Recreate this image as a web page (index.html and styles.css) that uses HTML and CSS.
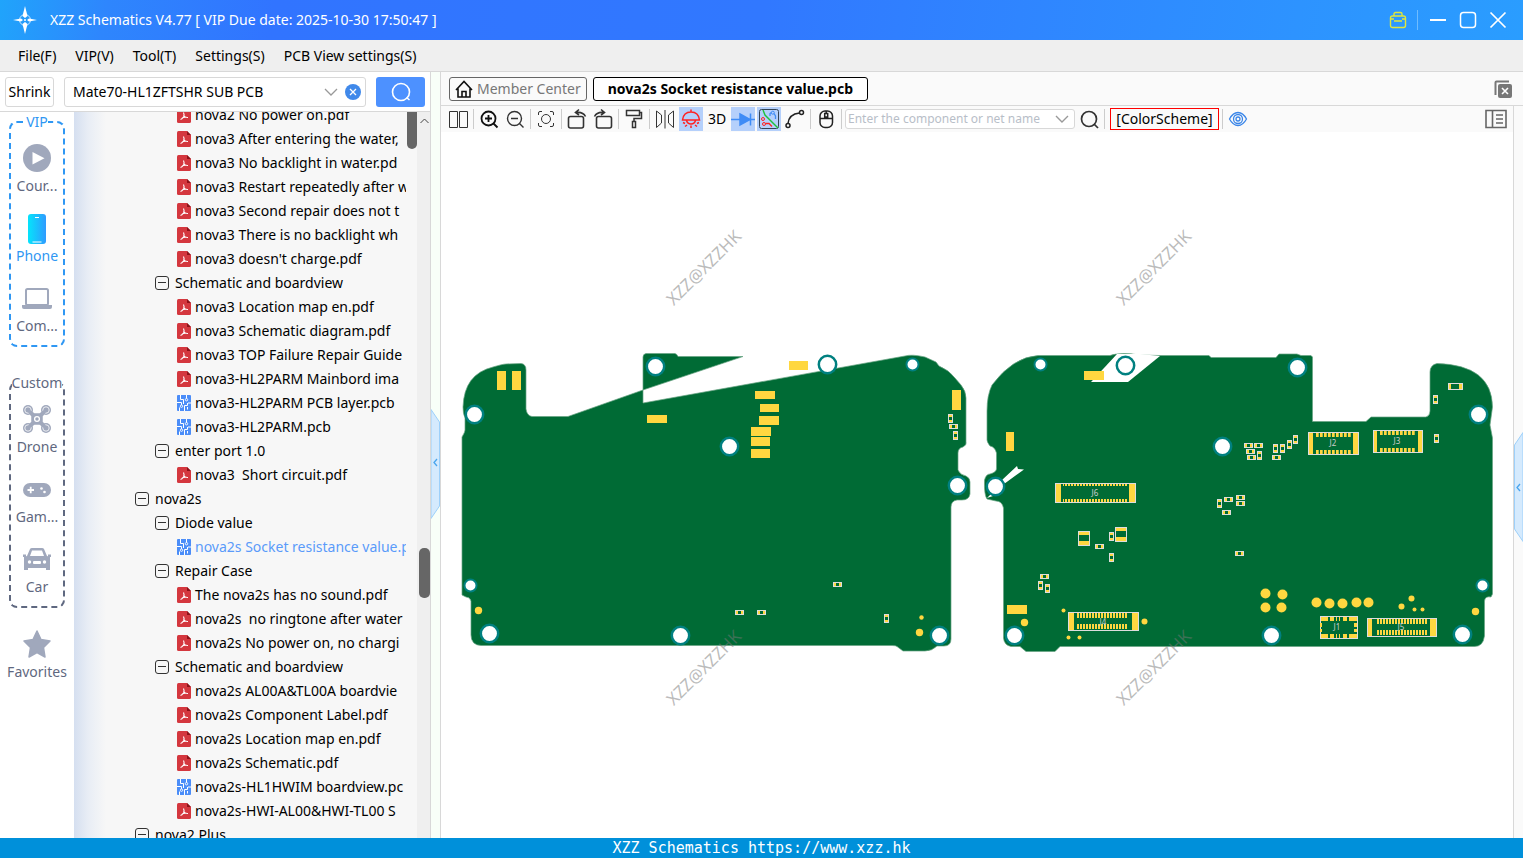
FILE: index.html
```
<!DOCTYPE html>
<html lang="en">
<head>
    <meta charset="utf-8">
    <title>XZZ Schematics</title>
    <link rel="stylesheet" href="styles.css">
</head>
<body>
    <!-- shared icons -->
    <svg class="defs" width="0" height="0">
        <symbol id="pdf" viewBox="0 0 14 16">
            <path d="M1.500 0H10L14 4V14.500Q14 16 12.500 16H1.500Q0 16 0 14.500V1.500Q0 0 1.500 0Z" fill="#d4373e"/>
            <path d="M10 0L14 4H10Z" fill="#8c1218"/>
            <path d="M6.500 5.500Q7.500 8 6.800 9.500Q5.500 12 3.500 12.500M6.500 8Q8 11 11 10.500M5 11Q7.500 9.800 9 10.300" fill="none" stroke="#fff" stroke-width="1.100"/>
        </symbol>
        <symbol id="pcb" viewBox="0 0 14 16">
            <rect width="14" height="16" rx="1" fill="#4b8df8"/>
            <path d="M3.500 0V4.500H6.500V9M0 7.500H4.500V10M9.500 3.500V0M7.500 16V10.500H10.500V8M11 8H14M2.500 16V12.500M10.500 12V14.500" fill="none" stroke="#fff"/>
            <circle cx="9.500" cy="4.700" r="1.200" fill="none" stroke="#fff" stroke-width=".9"/>
            <circle cx="4.500" cy="11.200" r="1.200" fill="none" stroke="#fff" stroke-width=".9"/>
        </symbol>
        <symbol id="minus" viewBox="0 0 14 14">
            <rect x=".5" y=".5" width="13" height="13" rx="2.500" fill="none" stroke="#333"/>
            <path d="M3 6.500H11" stroke="#333"/>
        </symbol>
    </svg>

    <header class="titlebar">
        <svg width="24" height="28" viewBox="0 0 24 28">
            <path d="M12 0L14.500 10L12 12L9.500 10ZM12 28L14.500 18L12 16L9.500 18ZM0 14L8 12.500L10 14L8 15.500ZM24 14L16 12.500L14 14L16 15.500Z" fill="#fff"/>
            <circle cx="12" cy="14" r="5.500" fill="none" stroke="#fff" stroke-width="1" opacity=".7"/>
            <circle cx="12" cy="14" r="1" fill="#fff"/>
        </svg>
        <h1>XZZ Schematics V4.77 [ VIP Due date: 2025-10-30 17:50:47 ]</h1>
        <div class="winbtns">
            <button aria-label="Toolbox"><svg width="18" height="18" viewBox="0 0 18 18" fill="none" stroke="#dfe63c" stroke-width="1.400"><rect x="1.500" y="5" width="15" height="11.500" rx="2"/><path d="M5 5V3Q5 1.500 6.500 1.500H11.500Q13 1.500 13 3V5M2 8H5M13 8H16M5 10H13"/></svg></button>
            <i></i>
            <button aria-label="Minimize"><svg width="18" height="18" viewBox="0 0 18 18" stroke="#fff" stroke-width="2"><path d="M1 9H17"/></svg></button>
            <button aria-label="Maximize"><svg width="18" height="18" viewBox="0 0 18 18" fill="none" stroke="#fff" stroke-width="1.500"><rect x="1.500" y="1.500" width="15" height="15" rx="3"/></svg></button>
            <button aria-label="Close"><svg width="18" height="18" viewBox="0 0 18 18" stroke="#fff" stroke-width="1.700"><path d="M1.500 1.500L16.500 16.500M16.500 1.500L1.500 16.500"/></svg></button>
        </div>
    </header>

    <nav class="menubar">
        <button>File(F)</button>
        <button>VIP(V)</button>
        <button>Tool(T)</button>
        <button>Settings(S)</button>
        <button>PCB View settings(S)</button>
    </nav>

    <main>
        <section class="left">
            <div class="search">
                <button class="shrink">Shrink</button>
                <div class="combo">
                    <input type="text" value="Mate70-HL1ZFTSHR SUB PCB" aria-label="Search files">
                    <button aria-label="History"><svg width="14" height="16" viewBox="0 0 14 16" fill="none" stroke="#999" stroke-width="1.300"><path d="M1 5L7 11L13 5"/></svg></button>
                    <button aria-label="Clear"><svg width="16" height="16" viewBox="0 0 16 16"><circle cx="8" cy="8" r="8" fill="#4089ea"/><path d="M5 5L11 11M11 5L5 11" stroke="#fff" stroke-width="1.300"/></svg></button>
                </div>
                <button class="go" aria-label="Search"><svg width="20" height="20" viewBox="0 0 20 20" fill="none" stroke="#fff" stroke-width="1.600"><circle cx="10" cy="10" r="8.500"/><path d="M15.500 15.500L18.500 18"/></svg></button>
            </div>
            <div class="browse">
                <nav class="side">
                    <fieldset class="vip">
                        <legend>VIP</legend>
                        <div class="group">
                            <button><svg width="28" height="28" viewBox="0 0 28 28"><circle cx="14" cy="14" r="14" fill="#a0a8bc"/><path d="M9.500 8V20.500L21.500 14.200Z" fill="#fff"/></svg>Cour...</button>
                            <button class="on"><svg width="28" height="30" viewBox="0 0 28 30"><defs><linearGradient id="ph"><stop offset="0" stop-color="#05e4fb"/><stop offset="1" stop-color="#2f9bff"/></linearGradient></defs><rect x="5" width="18" height="30" rx="3" fill="url(#ph)"/><path d="M12 3.500H16M9.500 28H18.500" stroke="#fff"/></svg>Phone</button>
                            <button><svg width="30" height="28" viewBox="0 0 30 28"><rect x="4" y="5" width="22" height="16" rx="1.500" fill="none" stroke="#a0a8bc" stroke-width="2"/><path d="M0 21H30V23Q30 25 28 25H2Q0 25 0 23Z" fill="#a0a8bc"/></svg>Com...</button>
                        </div>
                    </fieldset>
                    <fieldset class="custom">
                        <legend>Custom</legend>
                        <div class="group">
                            <button><svg width="28" height="28" viewBox="0 0 28 28"><g fill="#a0a8bc"><circle cx="5" cy="5" r="5"/><circle cx="23" cy="5" r="5"/><circle cx="5" cy="23" r="5"/><circle cx="23" cy="23" r="5"/></g><g fill="none" stroke="#fff" stroke-width=".8"><circle cx="5" cy="5" r="3.200"/><circle cx="23" cy="5" r="3.200"/><circle cx="5" cy="23" r="3.200"/><circle cx="23" cy="23" r="3.200"/></g><path d="M5 5L11 9.500H17L23 5L18.500 11V17L23 23L17 18.500H11L5 23L9.500 17V11Z" fill="#a0a8bc" stroke="#a0a8bc" stroke-width="2.500" stroke-linejoin="round"/><circle cx="14" cy="14" r="2.400" fill="none" stroke="#fff" stroke-width="1.300"/></svg>Drone</button>
                            <button><svg width="28" height="28" viewBox="0 0 28 28"><rect y="8" width="28" height="14" rx="7" fill="#a0a8bc"/><path d="M4.500 15H11M7.700 11.700V18.300" stroke="#fff" stroke-width="1.800"/><circle cx="18.500" cy="13.500" r="1.300" fill="#fff"/><circle cx="21.500" cy="17" r="1.300" fill="#fff"/></svg>Gam...</button>
                            <button><svg width="28" height="28" viewBox="0 0 28 28"><path d="M1 12L4 11L7 4Q7.500 3 9 3H19Q20.500 3 21 4L24 11L27 12V25H23V23H5V25H1ZM7 11H21L19 5.500H9Z" fill="#a0a8bc" fill-rule="evenodd"/><path d="M0 9.500H3V12H0ZM25 9.500H28V12H25Z" fill="#a0a8bc"/><circle cx="6.500" cy="17" r="1.700" fill="#fff"/><circle cx="21.500" cy="17" r="1.700" fill="#fff"/><rect x="10" y="16" width="8" height="3" rx="1" fill="#fff"/></svg>Car</button>
                        </div>
                    </fieldset>
                    <button class="fav"><svg width="28" height="28" viewBox="0 0 28 28"><path d="M14 1L18 9.500L27 11L20.500 17.500L22 27L14 22.500L6 27L7.500 17.500L1 11L10 9.500Z" fill="#a0a8bc" stroke="#a0a8bc" stroke-width="1.500" stroke-linejoin="round"/></svg>Favorites</button>
                </nav>

                <div class="treebox">
                    <ul class="tree">
                        <li class="l3"><svg><use href="#pdf"/></svg>nova2 No power on.pdf</li>
                        <li class="l3"><svg><use href="#pdf"/></svg>nova3 After entering the water,</li>
                        <li class="l3"><svg><use href="#pdf"/></svg>nova3 No backlight in water.pd</li>
                        <li class="l3"><svg><use href="#pdf"/></svg>nova3 Restart repeatedly after w</li>
                        <li class="l3"><svg><use href="#pdf"/></svg>nova3 Second repair does not t</li>
                        <li class="l3"><svg><use href="#pdf"/></svg>nova3 There is no backlight wh</li>
                        <li class="l3"><svg><use href="#pdf"/></svg>nova3 doesn't charge.pdf</li>
                        <li class="l2"><button aria-label="Collapse"><svg><use href="#minus"/></svg></button>Schematic and boardview</li>
                        <li class="l3"><svg><use href="#pdf"/></svg>nova3 Location map en.pdf</li>
                        <li class="l3"><svg><use href="#pdf"/></svg>nova3 Schematic diagram.pdf</li>
                        <li class="l3"><svg><use href="#pdf"/></svg>nova3 TOP Failure Repair Guide</li>
                        <li class="l3"><svg><use href="#pdf"/></svg>nova3-HL2PARM Mainbord ima</li>
                        <li class="l3"><svg><use href="#pcb"/></svg>nova3-HL2PARM PCB layer.pcb</li>
                        <li class="l3"><svg><use href="#pcb"/></svg>nova3-HL2PARM.pcb</li>
                        <li class="l2"><button aria-label="Collapse"><svg><use href="#minus"/></svg></button>enter port 1.0</li>
                        <li class="l3"><svg><use href="#pdf"/></svg>nova3&nbsp; Short circuit.pdf</li>
                        <li class="l1"><button aria-label="Collapse"><svg><use href="#minus"/></svg></button>nova2s</li>
                        <li class="l2"><button aria-label="Collapse"><svg><use href="#minus"/></svg></button>Diode value</li>
                        <li class="l3 sel"><svg><use href="#pcb"/></svg>nova2s Socket resistance value.p</li>
                        <li class="l2"><button aria-label="Collapse"><svg><use href="#minus"/></svg></button>Repair Case</li>
                        <li class="l3"><svg><use href="#pdf"/></svg>The nova2s has no sound.pdf</li>
                        <li class="l3"><svg><use href="#pdf"/></svg>nova2s&nbsp; no ringtone after water</li>
                        <li class="l3"><svg><use href="#pdf"/></svg>nova2s No power on, no chargi</li>
                        <li class="l2"><button aria-label="Collapse"><svg><use href="#minus"/></svg></button>Schematic and boardview</li>
                        <li class="l3"><svg><use href="#pdf"/></svg>nova2s AL00A&amp;TL00A boardvie</li>
                        <li class="l3"><svg><use href="#pdf"/></svg>nova2s Component Label.pdf</li>
                        <li class="l3"><svg><use href="#pdf"/></svg>nova2s Location map en.pdf</li>
                        <li class="l3"><svg><use href="#pdf"/></svg>nova2s Schematic.pdf</li>
                        <li class="l3"><svg><use href="#pcb"/></svg>nova2s-HL1HWIM boardview.pc</li>
                        <li class="l3"><svg><use href="#pdf"/></svg>nova2s-HWI-AL00&amp;HWI-TL00 S</li>
                        <li class="l1"><button aria-label="Collapse"><svg><use href="#minus"/></svg></button>nova2 Plus</li>
                    </ul>
                    <div class="innerbar"><i></i></div>
                    <div class="outerbar">
                        <svg width="12" height="16" viewBox="0 0 12 16" fill="none" stroke="#444"><path d="M1.500 11L5.500 7L9.500 11"/></svg>
                        <i></i>
                    </div>
                </div>
            </div>
        </section>

        <div class="strip">
            <button aria-label="Hide file list"><svg width="9" height="110" viewBox="0 0 9 110"><path d="M0 .5L8.500 13V97L0 109.500Z" fill="#d5eafd" stroke="#9dd0fa"/><path d="M6 50L3 53.500L6 57" fill="none" stroke="#4aa5ee" stroke-width="1.300"/></svg></button>
        </div>

        <section class="right">
            <div class="tabs">
                <button class="tab"><svg width="18" height="20" viewBox="0 0 18 20" fill="none" stroke="#111" stroke-width="1.600"><path d="M1 11L9 2.500L17 11M3 9.500V18H15V9.500M7 18V12.500H11V18"/></svg>Member Center</button>
                <button class="tab cur">nova2s Socket resistance value.pcb</button>
                <button class="closeall" aria-label="Close all tabs"><svg width="18" height="18" viewBox="0 0 18 18"><path d="M1.500 15V2.500Q1.500 1.500 2.500 1.500H15" fill="none" stroke="#777" stroke-width="2"/><rect x="4" y="4" width="14" height="14" rx="2" fill="#777"/><path d="M8 8L14 14M14 8L8 14" stroke="#fff" stroke-width="1.600"/></svg></button>
            </div>
            <div class="work">
                <div class="view">
                    <div class="tools">
                        <button aria-label="Split view"><svg viewBox="0 0 24 24"><path d="M3.500 4.500H11.500V20.500H3.500ZM13.500 4.500H21.500V20.500H13.500Z"/></svg></button>
                        <i></i>
                        <button aria-label="Zoom in"><svg viewBox="0 0 24 24" stroke="#111" stroke-width="1.800"><circle cx="11.500" cy="11.500" r="7"/><path d="M16.500 16.500L20.500 20.500M8 11.500H15M11.500 8V15"/></svg></button>
                        <button aria-label="Zoom out"><svg viewBox="0 0 24 24" stroke="#333" stroke-width="1.400"><circle cx="11.500" cy="11.500" r="7"/><path d="M16.500 16.500L20.500 20.500M8 11.500H15"/></svg></button>
                        <i></i>
                        <button aria-label="Fit"><svg viewBox="0 0 24 24"><circle cx="12" cy="12" r="4.500"/><path d="M4.500 8V6Q4.500 4.500 6 4.500H8M16 4.500H18Q19.500 4.500 19.500 6V8M19.500 16V18Q19.500 19.500 18 19.500H16M8 19.500H6Q4.500 19.500 4.500 18V16"/></svg></button>
                        <i></i>
                        <button aria-label="Rotate left"><svg viewBox="0 0 24 24" stroke="#333" stroke-width="1.600"><rect x="3.500" y="9.500" width="15" height="11.500" rx="2"/><path d="M11 5.500Q18 4.500 20.500 9.500M14 2.500L10.500 5.500L14 8"/></svg></button>
                        <button aria-label="Rotate right"><svg viewBox="0 0 24 24" stroke="#333" stroke-width="1.600"><rect x="5.500" y="9.500" width="15" height="11.500" rx="2"/><path d="M13 5.500Q6 4.500 3.500 9.500M10 2.500L13.500 5.500L10 8"/></svg></button>
                        <i></i>
                        <button aria-label="Brush"><svg viewBox="0 0 24 24" stroke="#333" stroke-width="1.500"><path d="M4.500 3.500H17.500V8.500H4.500ZM17.500 5.500H19.500V11.500H12V14.500"/><path d="M10.500 14.500H13.500V20.500H10.500Z"/></svg></button>
                        <i></i>
                        <button aria-label="Mirror"><svg viewBox="0 0 24 24"><path d="M3.500 4L8.500 8V16L3.500 20.500ZM12 3V21.500M20.500 4L15.500 8V16L20.500 20.500Z"/></svg></button>
                        <button class="on" aria-label="Lamp"><svg viewBox="0 0 24 24" stroke="#f22" stroke-width="1.500"><path d="M3.500 13Q4.500 5 12 5Q19.500 5 20.500 13ZM12 2.500V5M7.500 13.500Q8.500 17 12 17Q15.500 17 16.500 13.500M12 18.500V21M4 15.500L6 16.500M20 15.500L18 16.500M6 19.500L8 18M18 19.500L16 18"/></svg></button>
                        <button>3D</button>
                        <button class="on" aria-label="Diode"><svg viewBox="0 0 24 24" stroke="#3f8cf6" stroke-width="1.500"><path d="M0 12.500H24M19.500 6.500V18.500"/><path d="M9 7L19 12.500L9 18Z" fill="#3f8cf6"/></svg></button>
                        <button class="on" aria-label="Nets"><svg viewBox="0 0 24 24"><rect x="2.500" y="2.500" width="19" height="19" rx="2" stroke="#345"/><path d="M6 3L8 8L21 21" stroke="#1fc13c" stroke-width="1.400"/><path d="M13 9V6.500L14.500 5.500M17 6.500L18.500 9V12" stroke="#3f8cf6" stroke-width="1.300"/><circle cx="15.800" cy="5.700" r="1.500" stroke="#3f8cf6"/><path d="M8.500 16.500H12L15 19.500" stroke="#f22" stroke-width="1.300"/><circle cx="6" cy="12" r="1.500" stroke="#f22"/><circle cx="7" cy="17" r="1.500" stroke="#f22"/></svg></button>
                        <button aria-label="Curve"><svg viewBox="0 0 24 24" stroke="#222" stroke-width="1.500"><circle cx="5" cy="18.500" r="2"/><circle cx="18.500" cy="5.500" r="2"/><path d="M5 16.500Q6 7 16.500 6"/></svg></button>
                        <i></i>
                        <button aria-label="Mouse"><svg viewBox="0 0 24 24" stroke="#222" stroke-width="1.500"><rect x="6" y="4" width="12.500" height="16.500" rx="5"/><path d="M6 11.500H18.500M12.200 4V6M10.700 6.500H13.700V10H10.700Z"/></svg></button>
                        <i></i>
                        <div class="combo small">
                            <input type="text" placeholder="Enter the component or net name" aria-label="Component or net name">
                            <button aria-label="Recent"><svg viewBox="0 0 14 16" stroke="#999" stroke-width="1.400"><path d="M1 5L7 11L13 5"/></svg></button>
                        </div>
                        <button aria-label="Find"><svg viewBox="0 0 24 24" stroke="#333" stroke-width="1.700"><circle cx="12" cy="12" r="7.500"/><path d="M17 17L21 21"/></svg></button>
                        <i></i>
                        <button class="scheme">[ColorScheme]</button>
                        <i></i>
                        <button aria-label="Show"><svg viewBox="0 0 24 24" stroke="#3b86e8" stroke-width="1.300"><path d="M3.500 12Q7 5.500 12 5.500Q17 5.500 20.500 12Q17 18.500 12 18.500Q7 18.500 3.500 12Z"/><circle cx="12" cy="12" r="4.500"/><circle cx="12" cy="12" r="2"/></svg></button>
                        <button class="panelbtn" aria-label="Side panel"><svg width="22" height="20" viewBox="0 0 22 20" stroke="#666" stroke-width="1.600"><path d="M1 1.500H21V18.500H1ZM7.500 1.500V18.500M11 6H18M11 10H18M11 14H18"/></svg></button>
                    </div>
                    <svg class="board" viewBox="441 132 1072 706">
                        <defs>
                            <g id="rh"><rect x=".5" y=".5" width="8" height="4" fill="#ffd740" stroke="#ddd"/><rect x="3" y="1" width="3" height="3" fill="#006b35"/></g>
                            <g id="rv"><rect x=".5" y=".5" width="4" height="8" fill="#ffd740" stroke="#ddd"/><rect x="1" y="3" width="3" height="3" fill="#006b35"/></g>
                            <g id="cap"><rect x=".5" y=".5" width="11" height="14" fill="#ffd740" stroke="#ddd"/><rect x="1" y="4" width="10" height="6" fill="#006b35"/></g>
                            <circle id="hole" r="8.700" fill="#fff" stroke="#008080" stroke-width="2.500"/>
                            <circle id="hole2" r="6" fill="#fff" stroke="#008080" stroke-width="2"/>
                            <pattern id="pins" width="4" height="10" patternUnits="userSpaceOnUse"><rect width="2.700" height="10" fill="#ffd740"/></pattern>
                            <pattern id="fine" width="3" height="10" patternUnits="userSpaceOnUse"><rect width="2" height="10" fill="#ffd740"/></pattern>
                        </defs>
                        <!-- board outlines -->
                        <g fill="#006b35" stroke="#69a584" stroke-width=".7">
                            <path d="M463 407Q464 374 493 367Q503 364 506 364L521 363.500Q526 364 526 370V409Q527 416 532 416.500H568L643 390V357Q643 354 646 353.500H675Q677 354 678 356.500H743L643 390V403L905 356Q912 354 925 357L936 362L939 366Q949 370 955 378L961 385Q966 391 966 398V442Q967 445 963 447Q958 448 958 453V470Q960 475 966 476Q970 478 970 482V494Q969 500 962 500H957Q951 501 951 507V639Q951 646 944 646H937Q932 651 925 651H903L897 646.500Q896 645.500 892 645.500H481Q471 645 471 635V601Q470 597 466 597L462 595V437Q465 432 465 430V418Q463 414 463 407Z"/>
                            <path d="M987 411Q987 395 992 385Q1013 357 1038 355.500H1110Q1120 352 1140 355L1160 355.500H1209L1211 357.500H1276L1279 354H1297L1301 355.500H1311L1312.500 357V421.500H1366L1371 417H1426Q1430 416 1430 411V372Q1430 365 1437 363.500Q1492 365 1492.500 407L1490 425L1492.500 438V594L1491 597Q1485 596 1484.500 601V636Q1483 647 1474 646.500H1060L1055 651.500H1026L1020 646.500H1011Q1004 645 1003.500 638V508Q1002 501 996 501L987 499Q984 495 984.500 480Q986 474 990 474Q997 472 996.500 468V453Q995 447 990 446Q987 442 987 440Z"/>
                        </g>
                        <path d="M1117 354H1140L1160 356L1128 382H1091Z" fill="#fff"/>
                        <path d="M1002 480L1017 466L1018 469L1024 469.500L1004 484ZM987 498L991 494L993 496Z" fill="#fff"/>

                        <!-- bare pads -->
                        <g fill="#ffd740">
                            <rect x="497" y="371" width="9" height="19"/><rect x="512" y="371" width="9" height="19"/>
                            <rect x="647" y="415" width="20" height="8"/><rect x="789" y="361" width="19" height="9"/>
                            <rect x="755" y="391" width="20" height="8"/><rect x="760" y="404" width="19" height="8"/>
                            <rect x="759" y="416" width="20" height="9"/><rect x="751" y="427" width="20" height="9"/>
                            <rect x="751" y="437" width="19" height="9"/><rect x="751" y="449" width="19" height="9"/>
                            <rect x="952" y="390" width="9" height="20"/><rect x="1084" y="371" width="20" height="9"/>
                            <rect x="1006" y="432" width="8" height="19"/><rect x="1007" y="605" width="20" height="9"/>
                            <circle cx="478.500" cy="610.500" r="3.700"/><circle cx="921.500" cy="617.500" r="2.200"/><circle cx="919.500" cy="632.500" r="3.700"/>
                            <circle cx="1024.500" cy="622.500" r="3.700"/><circle cx="1063.500" cy="610.500" r="2"/><circle cx="1068.500" cy="637.500" r="2"/><circle cx="1079.500" cy="637.500" r="2"/><circle cx="1144.500" cy="621.500" r="3"/>
                            <circle cx="1265.500" cy="593.500" r="5"/><circle cx="1282.500" cy="594.500" r="5"/><circle cx="1265.500" cy="607.500" r="5"/><circle cx="1281.500" cy="607.500" r="5"/>
                            <circle cx="1316.500" cy="602.500" r="5"/><circle cx="1329.500" cy="603.500" r="5"/><circle cx="1342.500" cy="603.500" r="5"/><circle cx="1356.500" cy="602.500" r="5"/><circle cx="1368.500" cy="602.500" r="5"/>
                            <circle cx="1411.500" cy="598.500" r="3"/><circle cx="1401.500" cy="606.500" r="3"/><circle cx="1414.500" cy="609.500" r="2"/><circle cx="1422.500" cy="609.500" r="2"/><circle cx="1475.500" cy="611.500" r="3.700"/>
                        </g>

                        <!-- screw holes -->
                        <use href="#hole" x="474.500" y="414.500"/><use href="#hole" x="655.500" y="366.500"/><use href="#hole" x="729.500" y="446.500"/><use href="#hole" x="827.500" y="364.500"/>
                        <use href="#hole" x="957.500" y="485.500"/><use href="#hole" x="489.500" y="633.500"/><use href="#hole" x="680.500" y="635.500"/><use href="#hole" x="939.500" y="635.500"/>
                        <use href="#hole" x="1125.500" y="365.500"/><use href="#hole" x="1297.500" y="367.500"/><use href="#hole" x="1222.500" y="446.500"/><use href="#hole" x="995.500" y="486.500"/>
                        <use href="#hole" x="1014.500" y="635.500"/><use href="#hole" x="1271.500" y="635.500"/><use href="#hole" x="1462.500" y="634.500"/><use href="#hole" x="1478.500" y="414.500"/>
                        <use href="#hole2" x="470.500" y="585.500"/><use href="#hole2" x="912.500" y="364.500"/><use href="#hole2" x="1040.500" y="364.500"/><use href="#hole2" x="1482.500" y="585.500"/>

                        <!-- resistors and capacitors -->
                        <use href="#rv" x="948" y="414"/><use href="#rh" x="949" y="424"/><use href="#rv" x="953" y="431"/><use href="#rh" x="833" y="582"/>
                        <use href="#rh" x="735" y="610"/><use href="#rh" x="757" y="610"/><use href="#rv" x="884" y="614"/>
                        <use href="#cap" x="1078" y="531"/><use href="#cap" x="1115" y="527"/><use href="#rv" x="1109" y="532"/><use href="#rv" x="1109" y="553"/><use href="#rh" x="1095" y="544"/>
                        <use href="#rh" x="1040" y="574"/><use href="#rv" x="1038" y="581"/><use href="#rv" x="1045" y="584"/>
                        <use href="#rh" x="1224" y="497"/><use href="#rh" x="1236" y="495"/><use href="#rh" x="1236" y="501"/><use href="#rv" x="1217" y="499"/><use href="#rh" x="1222" y="510"/><use href="#rh" x="1235" y="551"/>
                        <use href="#rh" x="1244" y="443"/><use href="#rh" x="1254" y="443"/><use href="#rh" x="1246" y="449"/><use href="#rh" x="1247" y="455"/><use href="#rv" x="1257" y="451"/>
                        <use href="#rv" x="1273" y="444"/><use href="#rv" x="1280" y="444"/><use href="#rv" x="1287" y="440"/><use href="#rv" x="1293" y="435"/><use href="#rh" x="1272" y="455"/>
                        <use href="#rv" x="1433" y="395"/><use href="#rv" x="1434" y="434"/>
                        <rect x="1448.500" y="383.500" width="14" height="6" fill="#ffd740" stroke="#ddd"/><rect x="1451" y="384" width="8" height="5" fill="#006b35"/>

                        <!-- connectors -->
                        <g fill="none" stroke="#ddd">
                            <rect x="1055.500" y="483.500" width="80" height="19"/><rect x="1068.500" y="612.500" width="70" height="18"/>
                            <rect x="1308.500" y="432.500" width="50" height="22"/><rect x="1373.500" y="430.500" width="49" height="22"/>
                            <rect x="1367.500" y="618.500" width="69" height="18"/><rect x="1320.500" y="616.500" width="37" height="22"/>
                        </g>
                        <g fill="#ffd740">
                            <path d="M1056 484H1061V502H1056ZM1129 484H1135V502H1129ZM1069 613H1074V630H1069ZM1132 613H1138V630H1132Z"/>
                            <path d="M1309 433H1313V454H1309ZM1353 433H1358V454H1353ZM1374 431H1377V452H1374ZM1418 431H1422V452H1418Z"/>
                            <path d="M1368 619H1372V636H1368ZM1430 619H1436V636H1430Z"/>
                            <path d="M1321 617H1328V621H1321ZM1330 617H1334V621H1330ZM1336 617H1337V621H1336ZM1339 617H1340V621H1339ZM1343 617H1347V621H1343ZM1349 617H1357V621H1349ZM1321 634H1328V638H1321ZM1330 634H1334V638H1330ZM1336 634H1337V638H1336ZM1339 634H1340V638H1339ZM1343 634H1347V638H1343ZM1349 634H1357V638H1349ZM1354 623H1357V627H1354ZM1354 629H1357V632H1354ZM1320 623H1322V627H1320ZM1320 629H1322V632H1320Z"/>
                        </g>
                        <g fill="url(#fine)">
                            <rect x="1063" y="484" width="64" height="2"/><rect x="1063" y="499" width="64" height="3"/>
                            <rect x="1077" y="613" width="51" height="5"/><rect x="1077" y="624" width="51" height="5"/>
                            <rect x="1376" y="619" width="51" height="5"/><rect x="1376" y="630" width="51" height="5"/>
                        </g>
                        <g fill="url(#pins)">
                            <rect x="1316" y="433" width="35" height="4"/><rect x="1316" y="450" width="35" height="4"/>
                            <rect x="1380" y="431" width="35" height="4"/><rect x="1380" y="448" width="35" height="4"/>
                        </g>
                        <g class="ref">
                            <text x="1095" y="496">J6</text><text x="1103" y="625">J4</text><text x="1333" y="446">J2</text>
                            <text x="1397" y="444">J3</text><text x="1401" y="630">J5</text><text x="1337" y="630">J1</text>
                        </g>
                        <g class="mark">
                            <text transform="translate(708 272) rotate(-45)">XZZ@XZZHK</text>
                            <text transform="translate(1158 272) rotate(-45)">XZZ@XZZHK</text>
                            <text transform="translate(708 672) rotate(-45)">XZZ@XZZHK</text>
                            <text transform="translate(1158 672) rotate(-45)">XZZ@XZZHK</text>
                        </g>
                    </svg>
                </div>
                <div class="strip end">
                    <button aria-label="Show side panel"><svg width="9" height="110" viewBox="0 0 9 110"><path d="M9 .5L.5 13V97L9 109.500Z" fill="#d5eafd" stroke="#9dd0fa"/><path d="M6 52L3 55.500L6 59" fill="none" stroke="#4aa5ee" stroke-width="1.300"/></svg></button>
                </div>
            </div>
        </section>
    </main>

    <footer>XZZ Schematics https://www.xzz.hk</footer>
</body>
</html>
```
FILE: styles.css
```
* {
    box-sizing: border-box;
}
body {
    margin: 0;
    height: 100vh;
    display: flex;
    flex-direction: column;
    overflow: hidden;
    font: 14px/20px "Noto Sans", "Open Sans", sans-serif;
    color: #000;
    background: #fff;
}
button, input {
    font: inherit;
    color: inherit;
    border: 0;
    padding: 0;
    margin: 0;
    background: none;
}
svg {
    display: block;
    flex: none;
}
.defs {
    position: absolute;
}

/* title bar */
.titlebar {
    height: 40px;
    flex: none;
    display: flex;
    align-items: center;
    gap: 13px;
    padding: 0 16px 0 13px;
    color: #fff;
    background: linear-gradient(100deg, #20a4fb 0, #2e86fd 7%, #3174ff 18%, #3178ff 50%, #2d93ff 85%, #2a9dff 100%);
}
.titlebar h1 {
    margin: 0;
    font-size: 14px;
    font-weight: normal;
}
.winbtns {
    margin-left: auto;
    display: flex;
    align-items: center;
    gap: 12px;
}
.winbtns i {
    width: 1px;
    height: 20px;
    margin: 0 -1px 0 -2px;
    background: #6fbcff;
}

/* menu */
.menubar {
    height: 32px;
    flex: none;
    display: flex;
    gap: 19px;
    padding: 0 18px;
    background: #efefef;
    border-bottom: 1px solid #d8d8d8;
}

main {
    flex: 1;
    min-height: 0;
    display: flex;
}
.left {
    width: 431px;
    flex: none;
    display: flex;
    flex-direction: column;
    border-right: 1px solid #d8d8d8;
}
.search {
    height: 40px;
    flex: none;
    display: flex;
    align-items: center;
    gap: 10px;
    padding: 0 5px;
    border-bottom: 1px solid #d8d8d8;
}
.shrink {
    width: 49px;
    height: 30px;
    border: 1px solid #d8d8d8;
    border-radius: 3px;
}
.combo {
    flex: 1;
    min-width: 0;
    height: 30px;
    display: flex;
    align-items: center;
    gap: 7px;
    padding: 0 4px 0 8px;
    border: 1px solid #d8d8d8;
    border-radius: 3px;
    background: #fff;
}
.combo input {
    flex: 1;
    min-width: 0;
    outline: none;
}
.go {
    width: 49px;
    height: 30px;
    display: grid;
    place-items: center;
    border-radius: 3px;
    background: #4d91ff;
}

/* category sidebar */
.browse {
    flex: 1;
    min-height: 0;
    display: flex;
}
.side {
    width: 74px;
    flex: none;
    color: #5f6880;
}
.side fieldset {
    margin: 0 9px 26px;
    padding: 12px 0 9px;
    min-width: 0;
    border: 2px dashed #5f6880;
    border-radius: 8px;
}
.side .vip {
    border-color: #2f97f3;
}
.side .custom {
    margin-bottom: 22px;
}
.side legend {
    margin: 0 auto;
    padding: 0;
}
.vip legend, .side .on {
    color: #2f97f3;
}
.group {
    display: flex;
    flex-direction: column;
    gap: 18px;
}
.side button {
    width: 100%;
    height: 52px;
    display: flex;
    flex-direction: column;
    align-items: center;
    justify-content: space-between;
}

/* file tree */
.treebox {
    flex: 1;
    min-width: 0;
    display: flex;
    overflow: hidden;
    background: linear-gradient(90deg, #d5dff0 0, #e8edf5 14px, #f7f7f7 32px);
}
.tree {
    flex: 1;
    min-width: 0;
    margin: -9px 0 0;
    padding: 0;
    list-style: none;
    overflow: hidden;
}
.tree li {
    height: 24px;
    display: flex;
    align-items: center;
    gap: 6px;
    white-space: pre;
}
.tree .l1 { padding-left: 61px; }
.tree .l2 { padding-left: 81px; }
.tree .l3 { padding-left: 103px; gap: 4px; }
.tree .sel { color: #5a9bfa; }
.tree svg {
    width: 14px;
    height: 16px;
}
.tree button svg {
    height: 14px;
}
.innerbar {
    width: 11px;
    padding-left: 1px;
}
.innerbar i {
    display: block;
    height: 37px;
    border-radius: 0 0 5px 5px;
    background: #666;
}
.outerbar {
    width: 13px;
    padding-left: 2px;
    background: #efefef;
}
.outerbar i {
    display: block;
    height: 50px;
    margin-top: 420px;
    border-radius: 5px;
    background: #666;
}

/* collapse handles */
.strip {
    width: 10px;
    flex: none;
    display: flex;
    align-items: center;
    padding-top: 18px;
    background: #f8fff8;
    border-right: 1px solid #d8d8d8;
}
.strip.end {
    padding-top: 30px;
    border-right: 0;
    border-left: 1px solid #d8d8d8;
    background: #fafafa;
}

/* tabs */
.right {
    flex: 1;
    min-width: 0;
    display: flex;
    flex-direction: column;
}
.tabs {
    height: 34px;
    flex: none;
    display: flex;
    align-items: center;
    gap: 6px;
    padding: 0 11px 0 8px;
    background: #fafafa;
    border-bottom: 1px solid #d8d8d8;
}
.tab {
    height: 24px;
    display: flex;
    align-items: center;
    gap: 4px;
    padding: 0 5px;
    border: 1px solid #666;
    border-radius: 3px;
    color: #777;
}
.cur {
    padding: 0 14px;
    border-color: #000;
    color: #000;
    font-weight: bold;
    background: #fff;
}
.closeall {
    margin-left: auto;
}
.work {
    flex: 1;
    min-height: 0;
    display: flex;
}
.view {
    flex: 1;
    min-width: 0;
    display: flex;
    flex-direction: column;
}

/* tool row */
.tools {
    height: 26px;
    flex: none;
    display: flex;
    align-items: center;
    gap: 2px;
    padding: 0 6px 0 5px;
    background: #fafafa;
}
.tools button {
    width: 24px;
    height: 24px;
    flex: none;
}
.tools svg {
    width: 24px;
    height: 24px;
    fill: none;
}
.tools svg:not([stroke]) {
    stroke: #333;
}
.tools > i {
    width: 1px;
    height: 20px;
    margin: 0 1px;
    background: #ccc;
}
.tools .on {
    background: #b5d0fb;
}
.tools .small {
    flex: 0 0 230px;
    height: 20px;
    padding: 0 5px 0 2px;
    gap: 4px;
    font-size: 12px;
}
.small input::placeholder {
    color: #b8bec8;
}
.tools .small button, .tools .small svg {
    width: 14px;
    height: 16px;
}
.tools .scheme {
    width: 109px;
    height: 22px;
    margin-left: 2px;
    border: 1px solid #f00;
    line-height: 20px;
}
.tools .panelbtn {
    width: 22px;
    margin-left: auto;
}
.panelbtn svg {
    width: 22px;
}

/* canvas */
.board {
    flex: 1;
    width: 100%;
    min-height: 0;
}
.ref text {
    font-size: 8px;
    text-anchor: middle;
    fill: #ccc;
}
.mark text {
    font-size: 17px;
    text-anchor: middle;
    fill: #777;
    fill-opacity: .5;
}

footer {
    height: 20px;
    flex: none;
    text-align: center;
    color: #fff;
    background: #0090da;
    font: 15px/20px "DejaVu Sans Mono", "Liberation Mono", monospace;
}
```
